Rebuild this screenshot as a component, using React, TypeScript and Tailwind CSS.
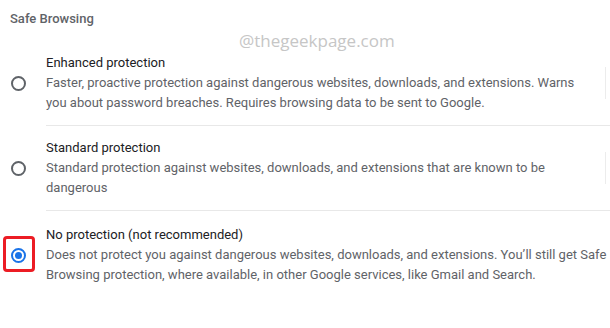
import React from 'react';

type Option = {
  title: string;
  desc: string;
  checked?: boolean;
  divider?: boolean;
  edge?: boolean;
};

const options: Option[] = [
  {
    title: 'Enhanced protection',
    desc: 'Faster, proactive protection against dangerous websites, downloads, and extensions. Warns you about password breaches. Requires browsing data to be sent to Google.',
    divider: true,
    edge: true,
  },
  {
    title: 'Standard protection',
    desc: 'Standard protection against websites, downloads, and extensions that are known to be dangerous',
    divider: true,
    edge: true,
  },
  {
    title: 'No protection (not recommended)',
    desc: 'Does not protect you against dangerous websites, downloads, and extensions. You\u2019ll still get Safe Browsing protection, where available, in other Google services, like Gmail and Search.',
    checked: true,
  },
];

const Radio = ({ checked }: { checked?: boolean }) =>
  checked ? (
    <div className="w-[15px] h-[15px] rounded-full border-2 border-[#1a73e8] flex items-center justify-center">
      <div className="w-[7px] h-[7px] rounded-full bg-[#1a73e8]" />
    </div>
  ) : (
    <div className="w-[15px] h-[15px] rounded-full border-2 border-[#5f6368]" />
  );

export default function App() {
  return (
    <div className="relative w-[610px] h-[328px] bg-white overflow-hidden font-['Roboto',sans-serif] text-[13px]">
      <div className="pl-[10px] pt-[9px] h-[41px] leading-[20px] font-medium text-[#5f6368]">Safe Browsing</div>

      {/* watermark */}
      <div className="absolute left-[239px] top-[29px] text-[17px] leading-[24px] text-[#c6c6c6] font-['Open_Sans',sans-serif]">
        @thegeekpage.com
      </div>

      {options.map((o, i) => (
        <div key={i} className="flex">
          <div className={`w-[46px] shrink-0 flex items-center justify-center pr-[10px] relative ${i === 2 ? 'pt-[2px]' : ''}`}>
            <Radio checked={o.checked} />
            {o.checked && (
              <div className="absolute left-[3px] top-[25px] w-[32px] h-[36px] border-[3px] border-[#ec1c24] rounded-[4px]" />
            )}
          </div>
          <div className={`flex-1 min-w-0 flex items-center ${o.divider ? 'border-b border-[#e8e8e8]' : ''} ${i === 2 ? 'pt-[14px]' : 'pt-[12px]'} pb-[12px]`}>
            <div className={`${o.edge ? 'w-[544px]' : 'w-[566px]'} shrink-0 leading-[20px]`}>
              <div className="text-[#202124]">{o.title}</div>
              <div className="text-[#5f6368]">{o.desc}</div>
            </div>
            {o.edge && <div className="ml-[15px] h-[32px] border-l border-[#ececec]" />}
          </div>
        </div>
      ))}
    </div>
  );
}
